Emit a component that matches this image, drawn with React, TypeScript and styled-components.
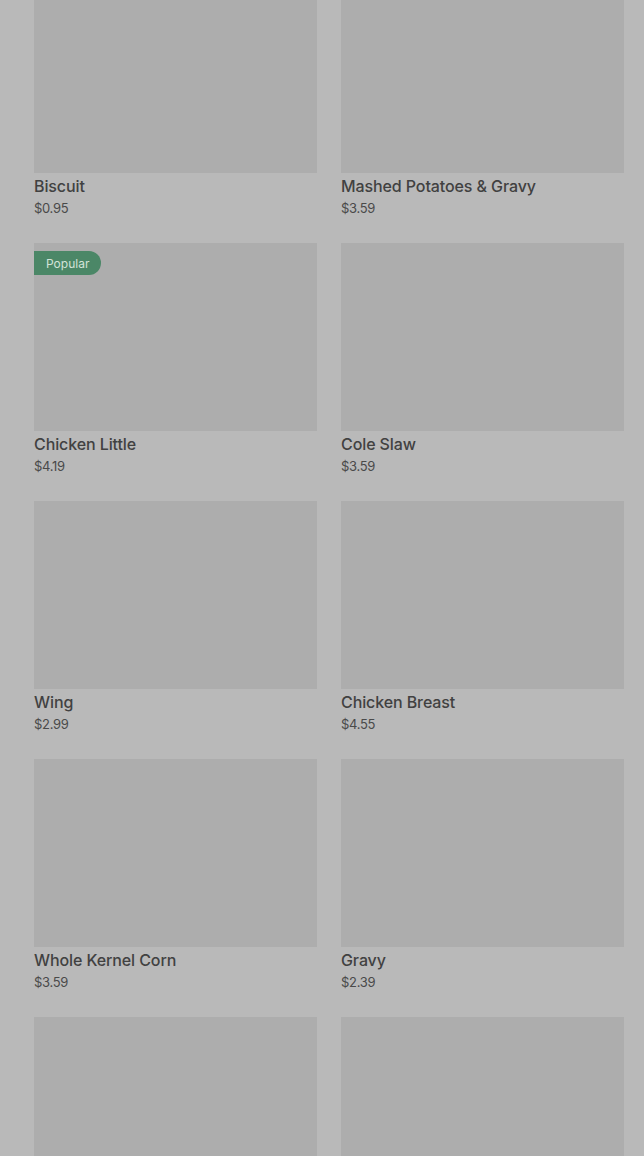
import styled, { createGlobalStyle } from 'styled-components';

const GlobalStyle = createGlobalStyle`
  html, body {
    margin: 0;
    padding: 0;
    background: #b9b9b9;
    font-family: Inter, "Noto Sans", sans-serif;
    overflow: hidden;
  }
`;

const Page = styled.div`
  width: 644px;
  height: 1156px;
  overflow: hidden;
  background: #b9b9b9;
`;

const Grid = styled.div`
  display: grid;
  grid-template-columns: 283px 283px;
  column-gap: 24px;
  row-gap: 26px;
  padding: 0 20px 0 34px;
  margin-top: -15px; /* list is scrolled a little */
`;

const Card = styled.div`
  display: flex;
  flex-direction: column;
`;

const Thumb = styled.div`
  position: relative;
  height: 188px;
  background: #adadad;
`;

const Badge = styled.span`
  position: absolute;
  top: 8px;
  left: 0;
  height: 24px;
  padding: 0 12px 0 12px;
  display: flex;
  align-items: center;
  background: #4b8767;
  color: #d3e3d8;
  font-size: 12px;
  border-radius: 0 12px 12px 0;
`;

const Info = styled.div`
  padding-top: 2px;
  display: flex;
  flex-direction: column;
`;

const Name = styled.div`
  font-size: 16px;
  line-height: 22px;
  font-weight: 500;
  color: #414141;
  letter-spacing: -0.1px;
`;

const Price = styled.div`
  margin-top: 2px;
  font-size: 13px;
  line-height: 18px;
  color: #4a4a4a;
  letter-spacing: -0.3px;
`;

type Item = { name: string; price: string; popular?: boolean };

const items: Item[] = [
  { name: 'Biscuit', price: '$0.95' },
  { name: 'Mashed Potatoes & Gravy', price: '$3.59' },
  { name: 'Chicken Little', price: '$4.19', popular: true },
  { name: 'Cole Slaw', price: '$3.59' },
  { name: 'Wing', price: '$2.99' },
  { name: 'Chicken Breast', price: '$4.55' },
  { name: 'Whole Kernel Corn', price: '$3.59' },
  { name: 'Gravy', price: '$2.39' },
  { name: '', price: '' },
  { name: '', price: '' },
];

export default function App() {
  return (
    <Page>
      <GlobalStyle />
      <Grid>
        {items.map((item, i) => (
          <Card key={i}>
            <Thumb>{item.popular && <Badge>Popular</Badge>}</Thumb>
            <Info>
              <Name>{item.name}</Name>
              <Price>{item.price}</Price>
            </Info>
          </Card>
        ))}
      </Grid>
    </Page>
  );
}
